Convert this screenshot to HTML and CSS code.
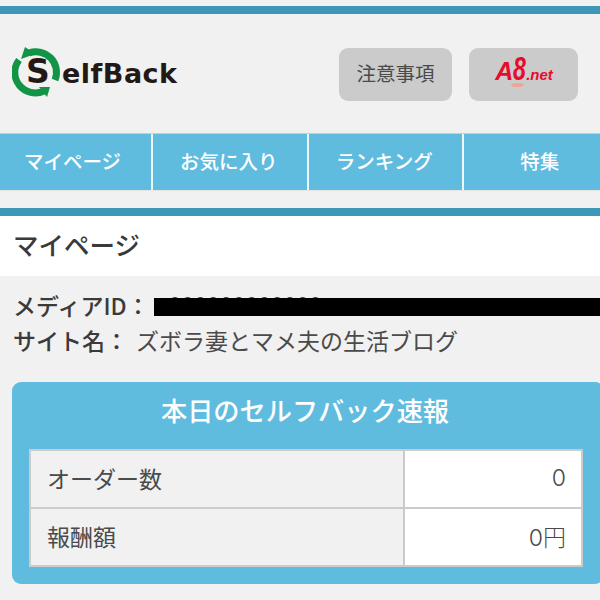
FILE: index.html
```html
<!DOCTYPE html>
<html lang="ja">
<head>
  <meta charset="UTF-8" />
  <title>SelfBack</title>
  <link rel="stylesheet" href="styles.css">
</head>
<body>
  <div class="header">
    <div class="logo">
      <svg class="logo-ring" width="50" height="50" viewBox="0 0 50 50">
        <path d="M17 6 A20.5 20.5 0 0 1 43 33" class="ring" />
        <path d="M32 44 A20.5 20.5 0 0 1 7 13" class="ring" />
        <path d="M13 0 L9 12 L23 7 Z" class="arrow" />
        <path d="M38 40 L27 40 L35 50 Z" class="arrow" />
      </svg>
      <span class="logo-s">S</span>
      <span class="logo-text">elfBack</span>
    </div>
    <div class="header-btns">
      <a class="btn btn-notice">注意事項</a>
      <a class="btn btn-a8"><span class="a8-a">A</span><span class="a8-eight"><span class="a8-digit">8</span><i class="a8-mark"></i></span><span class="a8-net">.net</span></a>
    </div>
  </div>

  <div class="nav">
    <a class="nav-item">マイページ</a>
    <a class="nav-item">お気に入り</a>
    <a class="nav-item">ランキング</a>
    <a class="nav-item">特集</a>
  </div>

  <div class="title-bar">
    <h1>マイページ</h1>
  </div>

  <div class="info">
    <div class="info-row">
      <b>メディアID：</b>
      <span class="media-id">000000000000<i class="redact"></i></span>
    </div>
    <div class="info-row">
      <b>サイト名：</b>
      <span class="site-name">ズボラ妻とマメ夫の生活ブログ</span>
    </div>
  </div>

  <div class="report">
    <h2>本日のセルフバック速報</h2>
    <table class="report-table">
      <tr>
        <th>オーダー数</th>
        <td>0</td>
      </tr>
      <tr>
        <th>報酬額</th>
        <td>0円</td>
      </tr>
    </table>
  </div>
</body>
</html>
```

FILE: styles.css
```css
* {
  margin: 0;
  padding: 0;
  box-sizing: border-box;
}

body {
  font-family: "Noto Sans CJK JP", "Noto Sans", sans-serif;
  background: #f1f1f1;
  color: #3c3c3c;
  height: 600px;
  overflow: hidden;
  padding-top: 6px;
}

.header {
  border-top: 8px solid #3d98b8;
  height: 127px;
  display: flex;
  justify-content: space-between;
  align-items: flex-start;
  padding: 33px 22px 0 12px;
}

.logo {
  position: relative;
  display: flex;
  align-items: center;
  width: 170px;
  height: 50px;
}

.logo-ring {
  flex: none;
}

.ring {
  fill: none;
  stroke: #129447;
  stroke-width: 7;
}

.arrow {
  fill: #129447;
}

.logo-s {
  position: absolute;
  left: 14px;
  top: 6px;
  font-family: "DejaVu Sans", sans-serif;
  font-weight: bold;
  font-size: 33px;
  line-height: 38px;
  color: #231815;
}

.logo-text {
  font-family: "DejaVu Sans", sans-serif;
  font-weight: bold;
  font-size: 27px;
  line-height: 30px;
  letter-spacing: 0.5px;
  color: #231815;
  margin: 4px 0 0 0;
}

.header-btns {
  display: flex;
  gap: 17px;
  margin-top: 1px;
}

.btn {
  display: flex;
  justify-content: center;
  align-items: center;
  height: 53px;
  background: #cbcbcb;
  border-radius: 9px;
  font-size: 19.5px;
  color: #4a4a4a;
}

.btn-notice {
  width: 113px;
  padding-bottom: 4px;
}

.btn-a8 {
  width: 109px;
  font-family: "Liberation Sans", sans-serif;
  font-weight: bold;
  font-style: italic;
  color: #e60c2c;
  align-items: baseline;
  padding: 3px 0 0 1px;
}

.a8-a {
  font-size: 25px;
  line-height: 36px;
}

.a8-eight {
  position: relative;
  width: 13px;
  font-size: 33px;
  line-height: 36px;
}

.a8-digit {
  display: inline-block;
  transform: scaleX(0.7);
  transform-origin: left;
}

.a8-mark {
  position: absolute;
  left: -2px;
  bottom: 0;
  width: 13px;
  height: 4px;
  border-radius: 50%;
  background: #efa595;
}

.a8-net {
  font-size: 15px;
}

.nav {
  display: flex;
  height: 58px;
  background: #60bcdf;
  border-top: 1px solid #a9d8ea;
  border-bottom: 1px solid #e4e4e4;
  overflow: hidden;
}

.nav-item {
  flex: 0 0 155.5px;
  display: flex;
  justify-content: center;
  align-items: center;
  color: #fff;
  font-size: 19.5px;
  font-weight: 500;
  padding: 0 2px 3px 0;
  border-right: 2px solid #eef7fb;
}

.nav-item:first-child {
  flex-basis: 153px;
  padding-right: 6px;
}

.nav-item:last-child {
  padding-right: 4px;
  border-right: none;
}

.title-bar {
  margin-top: 17px;
  border-top: 8px solid #3d98b8;
  background: #fff;
  height: 68px;
  padding: 10px 13px 0;
}

h1 {
  font-size: 25.5px;
  line-height: 36px;
  font-weight: 500;
  color: #3a3a3a;
}

.info {
  padding: 12px 0 0 13px;
  font-size: 23px;
  line-height: 35px;
}

.info-row {
  display: flex;
}

.info-row b {
  font-weight: 500;
  color: #3a3a3a;
}

.media-id {
  position: relative;
  flex: 1;
  margin-left: 4px;
  padding-left: 15px;
  line-height: 33px;
  white-space: nowrap;
}

.redact {
  position: absolute;
  left: 0;
  right: 0;
  top: 10px;
  height: 18px;
  background: #000;
}

.site-name {
  margin-left: 8px;
  color: #4a4a4a;
}

.report {
  margin: 24px -4px 0 12px;
  height: 202px;
  background: #60bcdf;
  border-radius: 9px;
  padding: 6px 21px 0 18px;
}

h2 {
  font-size: 26.2px;
  line-height: 44px;
  font-weight: 500;
  color: #fff;
  text-align: center;
  padding-right: 3px;
}

.report-table {
  width: 554px;
  margin: 17px 0 0 -1px;
  border-collapse: collapse;
  font-size: 23px;
  color: #4a4a4a;
}

.report-table th,
.report-table td {
  border: 2px solid #cbcbcb;
  height: 58px;
  padding: 0 15px 2px 16px;
}

.report-table th {
  width: 374px;
  background: #f1f1f1;
  font-weight: normal;
  text-align: left;
}

.report-table td {
  font-family: Inter, "Noto Sans CJK JP", sans-serif;
  font-weight: 300;
  background: #fff;
  text-align: right;
}
```
